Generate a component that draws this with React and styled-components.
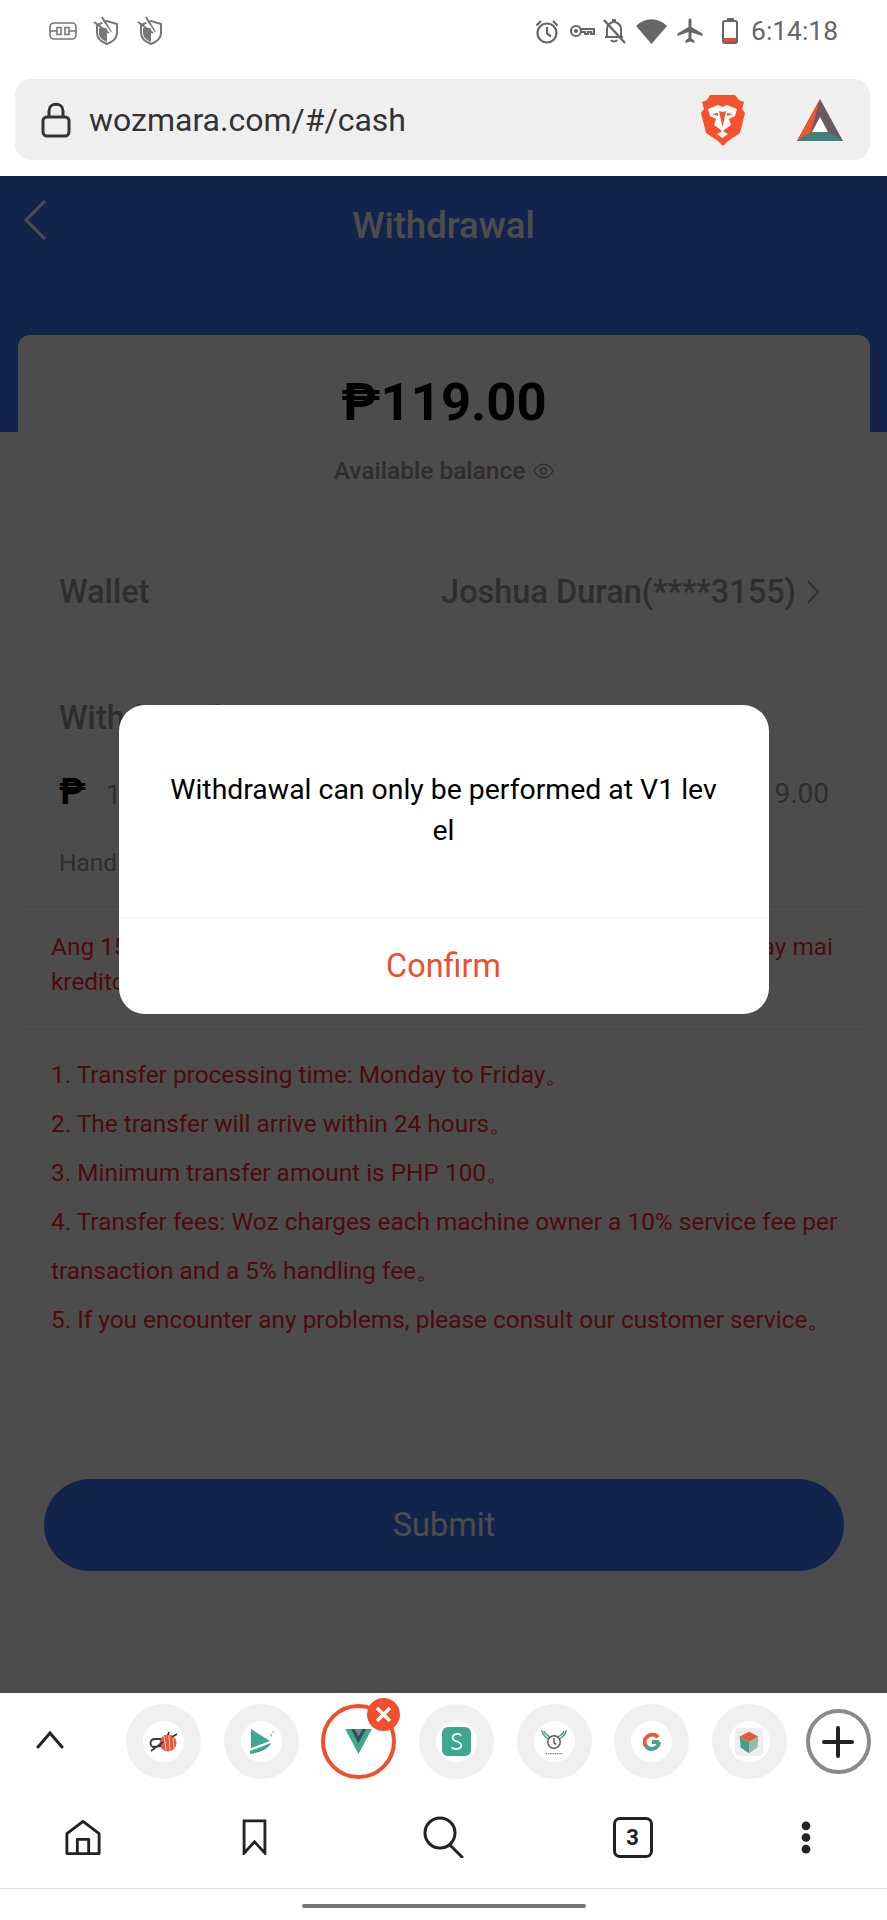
import styled, { createGlobalStyle } from 'styled-components';

const GlobalStyle = createGlobalStyle`
  html, body {
    margin: 0;
    padding: 0;
    background: #fff;
  }
  body {
    font-family: Roboto, "Liberation Sans", sans-serif;
  }
  * {
    box-sizing: border-box;
  }
`;

const Page = styled.div`
  width: 887px;
  height: 1920px;
  display: flex;
  flex-direction: column;
  background: #fff;
  overflow: hidden;
`;

/* phone status bar */
const StatusBar = styled.div`
  height: 62px;
  display: flex;
  align-items: center;
  justify-content: space-between;
  padding: 0 49px;
  color: #666;
`;

const StatusGroup = styled.div`
  display: flex;
  align-items: center;
  gap: ${({ $gap }) => $gap}px;
`;

const IconSlot = styled.span`
  display: flex;
  margin-left: ${({ $left }) => $left}px;
`;

const Clock = styled.span`
  font-size: 26.4px;
  color: #666;
  margin-left: 3px;
`;

/* browser address bar */
const UrlWrap = styled.div`
  padding: 17px 17px 16px 15px;
`;

const UrlBar = styled.div`
  height: 81px;
  display: flex;
  align-items: center;
  background: #efefef;
  border-radius: 16px;
  padding: 0 27px 0 26px;
`;

const UrlText = styled.span`
  flex: 1;
  margin-left: 18px;
  font-size: 32px;
  color: #333;
`;

const Shield = styled.svg`
  margin-right: 52px;
`;

/* site area */
const Main = styled.main`
  position: relative;
  height: 1517px;
  background: #fff;
`;

const Header = styled.header`
  height: 256px;
  background: #3c7bff;
  display: flex;
  justify-content: center;
  position: relative;
  padding-top: 29px;
  color: #fff;
`;

const BackButton = styled.svg`
  position: absolute;
  left: 22px;
  top: 24px;
`;

const Title = styled.h1`
  margin: 0;
  font-size: 36.5px;
  line-height: 42px;
  font-weight: 500;
`;

const Card = styled.section`
  position: relative;
  margin: -97px 17px 0 18px;
  background: #fff;
  border-radius: 12px 12px 0 0;
`;

const Balance = styled.div`
  padding-top: 33px;
  display: flex;
  flex-direction: column;
  align-items: center;
`;

const Amount = styled.div`
  font-size: 52.6px;
  line-height: 68px;
  font-weight: 700;
  color: #000;
`;

const BalanceLabel = styled.div`
  margin-top: 21px;
  display: flex;
  align-items: center;
  gap: 8px;
  font-size: 24.5px;
  line-height: 28px;
  font-weight: 500;
  color: #999;
`;

const WalletRow = styled.div`
  margin-top: 87px;
  padding: 0 50px 0 41px;
  display: flex;
  align-items: center;
  justify-content: space-between;
  font-size: 32.5px;
  line-height: 40px;
  font-weight: 500;
  color: #999;
`;

const WalletValue = styled.span`
  display: flex;
  align-items: center;
  gap: 10px;
`;

const SectionTitle = styled.h2`
  margin: 86px 0 0;
  padding-left: 41px;
  font-size: 32.5px;
  line-height: 40px;
  font-weight: 500;
  color: #999;
`;

const InputRow = styled.div`
  margin-top: 34px;
  padding: 0 41px;
  display: flex;
  align-items: center;
  justify-content: space-between;
  font-size: 28px;
  line-height: 40px;
  color: #999;
`;

const Peso = styled.span`
  font-size: 36px;
  font-weight: 700;
  color: #000;
  margin-right: 20px;
`;

const Handling = styled.div`
  margin-top: 33px;
  padding-left: 41px;
  font-size: 24.5px;
  line-height: 30px;
  color: #999;
`;

const Rule = styled.hr`
  margin: ${({ $top }) => $top}px 0 0;
  border: 0;
  border-top: 1px solid #eee;
`;

const Notice = styled.div`
  margin: 22px 0 0;
  padding: 0 37px 0 33px;
  font-size: 24.4px;
  line-height: 35px;
  color: #ff2a2a;
`;

const NoticeLine = styled.div`
  display: flex;
  justify-content: space-between;
  white-space: nowrap;
`;

const Rules = styled.ol`
  margin: 20px 0 0;
  padding: 0 20px 0 33px;
  list-style: none;
  font-size: 24.4px;
  line-height: 49px;
  color: #ff2a2a;
`;

const SubmitButton = styled.button`
  display: block;
  width: 800px;
  height: 92px;
  margin: 135px 0 0 26px;
  border: 0;
  border-radius: 46px;
  background: #3c7bff;
  color: #fff;
  font-family: inherit;
  font-size: 32.5px;
`;

/* dialog over the site */
const Overlay = styled.div`
  position: absolute;
  inset: 0;
  background: rgba(0, 0, 0, 0.7);
  display: flex;
  justify-content: center;
  align-items: flex-start;
  padding-top: 529px;
`;

const Modal = styled.div`
  width: 650px;
  height: 309px;
  background: #fff;
  border-radius: 26px;
  display: flex;
  flex-direction: column;
`;

const ModalMessage = styled.div`
  height: 213px;
  padding: 64px 50px 0;
  text-align: center;
  font-size: 28.4px;
  line-height: 41px;
  color: #000;
  word-break: break-all;
  border-bottom: 1px solid #f2f2f2;
`;

const ModalAction = styled.button`
  flex: 1;
  border: 0;
  background: none;
  font-family: inherit;
  font-size: 32.4px;
  color: #ee4f2e;
`;

/* browser bottom tray */
const TabStrip = styled.div`
  height: 105px;
  padding-top: 11px;
  display: flex;
  align-items: flex-start;
`;

const CollapseSlot = styled.div`
  width: 126px;
  height: 75px;
  padding: 0 0 4px 36px;
  display: flex;
  align-items: center;
`;

const Favicons = styled.div`
  display: flex;
  gap: 22.67px;
`;

const Chip = styled.div`
  position: relative;
  width: 75px;
  height: 75px;
  border-radius: 50%;
  display: flex;
  align-items: center;
  justify-content: center;
  background: ${({ $active }) => ($active ? '#fff' : '#f0f0f0')};
  border: ${({ $active }) => ($active ? '4px solid #f04e2e' : '0')};
`;

const ChipInner = styled.div`
  width: 41px;
  height: 41px;
  border-radius: 50%;
  display: flex;
  align-items: center;
  justify-content: center;
  background: #fff;
`;

const CloseBadge = styled.div`
  position: absolute;
  top: -10px;
  right: -8px;
  width: 33px;
  height: 33px;
  border-radius: 50%;
  background: #f04e2e;
  display: flex;
  align-items: center;
  justify-content: center;
`;

const AddButton = styled.div`
  width: 65px;
  height: 65px;
  margin: 5px 0 0 19px;
  border: 4px solid #8a8a8a;
  border-radius: 50%;
  display: flex;
  align-items: center;
  justify-content: center;
`;

const NavBar = styled.nav`
  height: 78px;
  padding-left: 5px;
  display: grid;
  grid-template-columns: 155px 189px 189px 189px 157px;
  justify-items: center;
  align-items: center;
`;

const TabCount = styled.div`
  width: 40px;
  height: 41px;
  border: 3px solid #222;
  border-radius: 7px;
  display: flex;
  align-items: center;
  justify-content: center;
  font-size: 22px;
  font-weight: 700;
  color: #222;
`;

const HomeRow = styled.div`
  flex: 1;
  border-top: 1px solid #ddd;
  margin-top: 12px;
  display: flex;
  justify-content: center;
  padding-top: 15px;
`;

const HomeIndicator = styled.div`
  width: 284px;
  height: 4px;
  border-radius: 2px;
  background: #777;
`;

const PlugIcon = () => (
  <svg width="28" height="18" viewBox="0 0 28 18" fill="none" stroke="#777" strokeWidth="1.6">
    <rect x="1" y="1" width="26" height="16" rx="4" />
    <path d="M1 9h7M20 9h7M8 5.500h4v7H8zM16 5.500h4v7h-4z" />
  </svg>
);

const ShieldIcon = () => (
  <svg width="28" height="30" viewBox="0 0 28 30" fill="none">
    <path d="M4 9l10-4 10 3v9c0 6-5 9-10 11-5-2-10-5-10-11z" stroke="#777" strokeWidth="2" />
    <path d="M14 12v14c-4-2-8-4-8-9v-5z" fill="#777" />
    <path d="M1 6l15 11M9 1l9 15" stroke="#777" strokeWidth="2" />
    <path d="M6 1l11 15" stroke="#fff" strokeWidth="1.400" />
  </svg>
);

const AlarmIcon = () => (
  <svg width="24" height="25" viewBox="0 0 24 25" fill="none" stroke="#666" strokeWidth="2.200">
    <circle cx="12" cy="14" r="9.500" />
    <path d="M12 8v6.500l4 3M1.500 6.500L6 2M22.500 6.500L18 2" />
  </svg>
);

const KeyIcon = () => (
  <svg width="26" height="14" viewBox="0 0 26 14" fill="none" stroke="#666" strokeWidth="2.200">
    <circle cx="7" cy="7" r="5" />
    <circle cx="7" cy="7" r="1" />
    <path d="M12 5h13v5h-3v-2h-3v2h-3V8h-4" />
  </svg>
);

const BellOffIcon = () => (
  <svg width="24" height="26" viewBox="0 0 24 26" fill="none" stroke="#666" strokeWidth="2">
    <path d="M5 19V11c0-4 3-6 6-7V2h2v2c3 1 6 3 6 7v8h2M3 19h15" />
    <path d="M9 22c1 2 5 2 6 0" />
    <path d="M2 2l21 23" strokeWidth="2.400" />
  </svg>
);

const WifiIcon = () => (
  <svg width="31" height="25" viewBox="0 0 31 25">
    <path d="M0 7C9-2 22-2 31 7L15.500 25z" fill="#666" />
  </svg>
);

const PlaneIcon = () => (
  <svg width="26" height="26" viewBox="0 0 26 26">
    <path d="M11.500 2c0-2 3-2 3 0v7l11 6.500v2.500l-11-3.500v6l3 2.500V25l-4.500-1.500L8.500 25v-2.500l3-2.500v-6L.5 18v-2.500l11-6.500z" fill="#666" />
  </svg>
);

const BatteryIcon = () => (
  <svg width="16" height="26" viewBox="0 0 16 26" fill="none">
    <path d="M5 1h6v2" stroke="#666" strokeWidth="2" />
    <rect x="1" y="3" width="14" height="22" rx="2" stroke="#666" strokeWidth="2" />
    <rect x="2" y="20" width="12" height="4" fill="#e2483a" />
  </svg>
);

const LockIcon = () => (
  <svg width="30" height="36" viewBox="0 0 30 36" fill="none" stroke="#333" strokeWidth="3">
    <rect x="2" y="15" width="26" height="19" rx="4" />
    <path d="M8 15V9c0-9 14-9 14 0v6" />
  </svg>
);

const BraveIcon = () => (
  <Shield width="45" height="52" viewBox="0 0 45 52">
    <path d="M10 1h25l4 5 5 2-2 7 3 4-5 20-12 8-5 5-5-5-12-8L1 19l3-4-2-7 5-2z" fill="#f4512c" />
    <path d="M8 15l10-4 4.500 2 4.500-2 10 4-2 7-6 3 2 6-7 5-1.500 3-1.500-3-7-5 2-6-6-3z" fill="#fff" />
    <path d="M19 17l3.500 16 3.500-16-3.500 1z" fill="#f4512c" />
    <path d="M12 20l6-1v3zM33 20l-6-1v3z" fill="#f4512c" />
    <path d="M17 40l5.500-3 5.500 3-5.500 4z" fill="#fff" />
  </Shield>
);

const BatIcon = () => (
  <svg width="46" height="42" viewBox="0 0 46 42">
    <path d="M23 0L0 42h46z" fill="#6a5a60" />
    <path d="M23 0L0 42l14-9z" fill="#f4512c" />
    <path d="M15 33l8-15 8 15z" fill="#fff" />
    <path d="M0 42l14-9h18l14 9z" fill="#41807d" />
  </svg>
);

const ChevronUp = () => (
  <svg width="28" height="18" viewBox="0 0 28 18" fill="none" stroke="#222" strokeWidth="3" strokeLinecap="round">
    <path d="M2 16L14 2l12 14" />
  </svg>
);

const BeeFavicon = () => (
  <svg width="29" height="22" viewBox="0 0 29 22" fill="none">
    <circle cx="19" cy="12" r="8.500" fill="#e8593c" />
    <path d="M15 5l2 14M20 4l1 16M24 6l1 11" stroke="#f5c6b8" strokeWidth="1" />
    <path d="M12 8H6C1 8 0 14 4 16l8-1M2 20l12-9" stroke="#3a3a3a" strokeWidth="1.800" />
    <path d="M19 4l1-3M23 6l5-3" stroke="#3a3a3a" strokeWidth="1.800" />
  </svg>
);

const PlayFavicon = () => (
  <svg width="25" height="25" viewBox="0 0 25 25">
    <path d="M2 0l19 12L2 19z" fill="#3fa78e" />
    <path d="M1 22l21-8c-2 4-7 9-21 11z" fill="#3fa78e" />
    <path d="M21 5l2 1-1 2zM23 2l2 1-1 1z" fill="#3fa78e" />
  </svg>
);

const VueFavicon = () => (
  <svg width="27" height="25" viewBox="0 0 32 30">
    <path d="M0 0h32L16 30z" fill="#41a68c" />
    <path d="M7 0h18L16 17z" fill="#34495e" />
    <path d="M11 0h10l-5 9z" fill="#fff" opacity="0.300" />
  </svg>
);

const StackFavicon = () => (
  <svg width="29" height="29" viewBox="0 0 30 30">
    <rect width="30" height="30" rx="6" fill="#3fa78e" />
    <path d="M20 9c-3-3-9-2-9 2 0 5 9 3 9 8 0 4-7 5-10 2" fill="none" stroke="#fff" strokeWidth="1.800" />
  </svg>
);

const ClockFavicon = () => (
  <svg width="28" height="28" viewBox="0 0 34 36" fill="none" stroke="#4a9d8b" strokeWidth="1.800">
    <path d="M1 3c2 6 5 10 10 11M33 3c-2 6-5 10-10 11M4 4c2 4 4 6 8 7M30 4c-2 4-4 6-8 7" />
    <circle cx="17" cy="18" r="8" stroke="#555" />
    <path d="M17 13v6l3 2" stroke="#555" />
    <path d="M6 33h22" stroke="#888" strokeWidth="1.500" strokeDasharray="2 1" />
  </svg>
);

const GoogleFavicon = () => (
  <svg width="18" height="18" viewBox="0 0 30 30" fill="none" strokeWidth="6.500">
    <path d="M25 7a12 12 0 0 0-20 2" stroke="#e8593c" />
    <path d="M5 8a12 12 0 0 0 0 14" stroke="#e8593c" />
    <path d="M4.500 21a12 12 0 0 0 22-6" stroke="#3fa78e" />
    <path d="M15 15h12" stroke="#3fa78e" />
  </svg>
);

const CubeFavicon = () => (
  <svg width="28" height="28" viewBox="0 0 30 30">
    <rect width="30" height="30" rx="5" fill="#eee" />
    <path d="M15 4l10 5-10 6-10-6z" fill="#e8593c" />
    <path d="M5 9l10 6v12L6 21z" fill="#4a9d8b" />
    <path d="M25 9l-10 6v12l9-6z" fill="#9ab7b0" />
  </svg>
);

const favicons = [
  { id: 'bee', Icon: BeeFavicon },
  { id: 'play', Icon: PlayFavicon },
  { id: 'vue', Icon: VueFavicon, active: true },
  { id: 'stack', Icon: StackFavicon },
  { id: 'clock', Icon: ClockFavicon },
  { id: 'google', Icon: GoogleFavicon },
  { id: 'cube', Icon: CubeFavicon },
];

const rules = [
  '1. Transfer processing time: Monday to Friday。',
  '2. The transfer will arrive within 24 hours。',
  '3. Minimum transfer amount is PHP 100。',
  '4. Transfer fees: Woz charges each machine owner a 10% service fee per transaction and a 5% handling fee。',
  '5. If you encounter any problems, please consult our customer service。',
];

export default function App() {
  return (
    <Page>
      <GlobalStyle />
      <StatusBar>
        <StatusGroup $gap={16}>
          <PlugIcon />
          <ShieldIcon />
          <ShieldIcon />
        </StatusGroup>
        <StatusGroup $gap={10}>
          <AlarmIcon />
          <KeyIcon />
          <IconSlot $left={-3}>
            <BellOffIcon />
          </IconSlot>
          <WifiIcon />
          <PlaneIcon />
          <IconSlot $left={9}>
            <BatteryIcon />
          </IconSlot>
          <Clock>6:14:18</Clock>
        </StatusGroup>
      </StatusBar>

      <UrlWrap>
        <UrlBar>
          <LockIcon />
          <UrlText>wozmara.com/#/cash</UrlText>
          <BraveIcon />
          <BatIcon />
        </UrlBar>
      </UrlWrap>

      <Main>
        <Header>
          <BackButton width="26" height="40" viewBox="0 0 26 40" fill="none" stroke="#fff" strokeWidth="3">
            <path d="M23 1L4 20l19 19" />
          </BackButton>
          <Title>Withdrawal</Title>
        </Header>
        <Card>
          <Balance>
            <Amount>₱119.00</Amount>
            <BalanceLabel>
              Available balance
              <svg width="21" height="16" viewBox="0 0 21 16" fill="none" stroke="#999" strokeWidth="1.500">
                <path d="M1 8c5-9 14-9 19 0-5 9-14 9-19 0z" />
                <circle cx="10.500" cy="8" r="3" />
              </svg>
            </BalanceLabel>
          </Balance>

          <WalletRow>
            Wallet
            <WalletValue>
              Joshua Duran(****3155)
              <svg width="14" height="26" viewBox="0 0 14 26" fill="none" stroke="#999" strokeWidth="2">
                <path d="M2 2l10 11L2 24" />
              </svg>
            </WalletValue>
          </WalletRow>

          <SectionTitle>Withdrawal amount</SectionTitle>
          <InputRow>
            <span>
              <Peso>₱</Peso>
              119.00
            </span>
            <span>119.00</span>
          </InputRow>
          <Handling>Handling fee</Handling>
          <Rule $top={28} />

          <Notice>
            <NoticeLine>
              <span>Ang 15% na bayarin ay ibabawas sa halaga ng pag-withdraw</span>
              <span>ay mai</span>
            </NoticeLine>
            <NoticeLine>kredito sa inyong account</NoticeLine>
          </Notice>
          <Rule $top={30} />

          <Rules>
            {rules.map((rule) => (
              <li key={rule}>{rule}</li>
            ))}
          </Rules>

          <SubmitButton>Submit</SubmitButton>
        </Card>

        <Overlay>
          <Modal>
            <ModalMessage>Withdrawal can only be performed at V1 level</ModalMessage>
            <ModalAction>Confirm</ModalAction>
          </Modal>
        </Overlay>
      </Main>

      <TabStrip>
        <CollapseSlot>
          <ChevronUp />
        </CollapseSlot>
        <Favicons>
          {favicons.map(({ id, Icon, active }) => (
            <Chip key={id} $active={active}>
              <ChipInner>
                <Icon />
              </ChipInner>
              {active && (
                <CloseBadge>
                  <svg width="17" height="17" viewBox="0 0 17 17" stroke="#fff" strokeWidth="3.500">
                    <path d="M2 2l13 13M15 2L2 15" />
                  </svg>
                </CloseBadge>
              )}
            </Chip>
          ))}
        </Favicons>
        <AddButton>
          <svg width="34" height="34" viewBox="0 0 34 34" stroke="#222" strokeWidth="4" strokeLinecap="round">
            <path d="M17 3v28M3 17h28" />
          </svg>
        </AddButton>
      </TabStrip>

      <NavBar>
        <svg width="36" height="37" viewBox="0 0 38 38" fill="none" stroke="#222" strokeWidth="3" strokeLinejoin="round">
          <path d="M2 36V15L19 2l17 13v21zM13 36V21h12v15" />
        </svg>
        <svg width="25" height="36" viewBox="0 0 26 38" fill="none" stroke="#222" strokeWidth="3">
          <path d="M2 2h22v34l-11-12-11 12z" />
        </svg>
        <svg width="42" height="42" viewBox="0 0 42 42" fill="none" stroke="#222" strokeWidth="3" strokeLinecap="round">
          <circle cx="17" cy="17" r="15" />
          <path d="M27 29l12 12" />
        </svg>
        <TabCount>3</TabCount>
        <svg width="10" height="33" viewBox="0 0 10 34" fill="#222">
          <circle cx="5" cy="5" r="4.500" />
          <circle cx="5" cy="17" r="4.500" />
          <circle cx="5" cy="29" r="4.500" />
        </svg>
      </NavBar>

      <HomeRow>
        <HomeIndicator />
      </HomeRow>
    </Page>
  );
}
